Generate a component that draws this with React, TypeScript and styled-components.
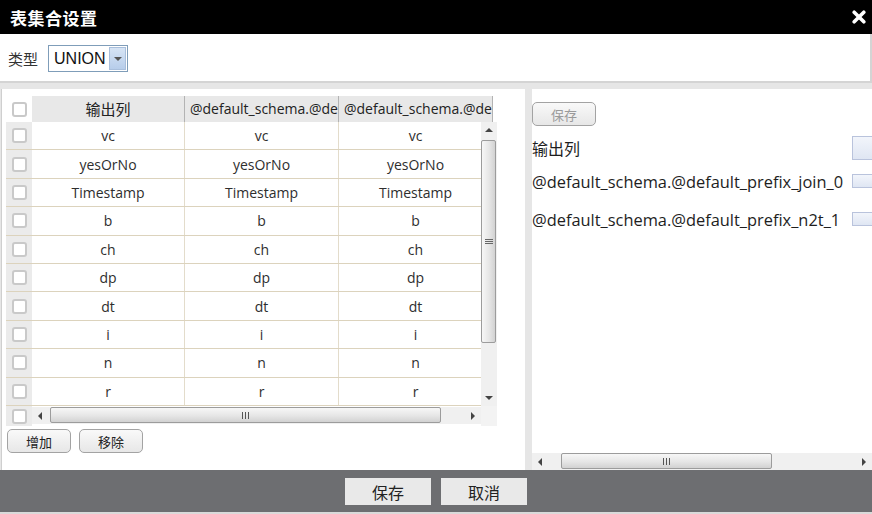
import React from 'react';
import styled, { createGlobalStyle } from 'styled-components';

const Global = createGlobalStyle`
  *, *::before, *::after { box-sizing: border-box; }
  html, body { margin: 0; padding: 0; background: #ffffff; }
  body { font-family: "Open Sans", "Noto Sans CJK SC", sans-serif; }
`;

const Dialog = styled.div`
  width: 872px;
  height: 514px;
  display: flex;
  flex-direction: column;
  overflow: hidden;
  background: #e6e6e6;
`;

const TitleBar = styled.div`
  height: 34px;
  flex: none;
  background: #000;
  color: #fff;
  display: flex;
  align-items: center;
  justify-content: space-between;
  padding: 0 6px 0 10px;
  font-family: "Noto Sans CJK SC", sans-serif;
  font-weight: 700;
  font-size: 17px;
  letter-spacing: 0.5px;
`;

const CloseBtn = styled.span`
  width: 14px;
  height: 14px;
  display: flex;
`;

const TypeRow = styled.div`
  height: 49px;
  flex: none;
  background: #fff;
  border-bottom: 2px solid #d4d4d4;
  border-right: 2px solid #d4d4d4;
  display: flex;
  align-items: center;
  gap: 10px;
  padding: 2px 0 0 8px;
`;

const TypeLabel = styled.span`
  font-family: "Noto Sans CJK SC", sans-serif;
  font-size: 15px;
  color: #333;
`;

const Select = styled.div`
  width: 80px;
  height: 27px;
  border: 1px solid #7f9db9;
  display: flex;
  background: #fff;
`;

const SelectText = styled.span`
  flex: 1;
  padding-left: 5px;
  font-family: "Liberation Sans", Arial, sans-serif;
  font-size: 16px;
  line-height: 25px;
  color: #111;
`;

const SelectBtn = styled.span`
  width: 17px;
  margin: 1px;
  border: 1px solid #a9bfdc;
  background: linear-gradient(to bottom, #d6e4f5, #b7cdea);
  display: flex;
  align-items: center;
  justify-content: center;
`;

const Main = styled.div`
  flex: 1;
  display: flex;
  gap: 7px;
  padding-top: 6px;
  min-height: 0;
`;

const LeftPanel = styled.div`
  width: 524px;
  flex: none;
  margin-left: 1px;
  border-left: 1px solid #cfcfcf;
  background: #fff;
  padding: 7px 0 0 4px;
`;

const RightPanel = styled.div`
  flex: 1;
  min-width: 0;
  background: #fff;
  display: flex;
  flex-direction: column;
  overflow: hidden;
  padding-top: 13px;
`;

const TableBox = styled.div`
  width: 491px;
  display: flex;
  flex-direction: column;
`;

const HeadRow = styled.div`
  display: flex;
  height: 26px;
  overflow: hidden;
`;

const CheckCol = styled.div<{ $head?: boolean }>`
  width: 26px;
  flex: none;
  background: ${(p) => (p.$head ? '#ffffff' : '#ebebeb')};
  display: flex;
  align-items: center;
  justify-content: center;
`;

const HeadCell = styled.div<{ $w: number; $cjk?: boolean }>`
  width: ${(p) => p.$w}px;
  flex: none;
  background: #e8e8e8;
  border-right: 1px solid #b3b3b3;
  padding: 0 5px;
  text-align: center;
  white-space: nowrap;
  overflow: hidden;
  font-family: ${(p) => (p.$cjk ? '"Noto Sans CJK SC", sans-serif' : '"Open Sans", sans-serif')};
  font-size: ${(p) => (p.$cjk ? 15 : 14)}px;
  line-height: 26px;
  color: #222;
`;

const Body = styled.div`
  display: flex;
  height: 284px;
`;

const Rows = styled.div`
  width: 475px;
  flex: none;
  overflow: hidden;
`;

const Row = styled.div`
  display: flex;
  width: 487px;
  height: 28.4px;
  border-bottom: 1px solid #dcd3bd;
`;

const Cell = styled.div<{ $w: number }>`
  width: ${(p) => p.$w}px;
  flex: none;
  border-right: 1px solid #e3dccb;
  display: flex;
  align-items: center;
  justify-content: center;
  font-size: 14px;
  color: #2e2e2e;
  white-space: nowrap;
`;

const Check = styled.span`
  width: 15px;
  height: 15px;
  border: 2px solid #c9c9c9;
  border-radius: 3px;
  background: #fff;
`;

const VScroll = styled.div`
  width: 16px;
  flex: none;
  background: #f0f0f0;
  display: flex;
  flex-direction: column;
`;

const VTrack = styled.div`
  flex: 1;
  display: flex;
  flex-direction: column;
`;

const VThumb = styled.div<{ $off: number; $len: number }>`
  margin-top: ${(p) => p.$off}px;
  height: ${(p) => p.$len}px;
  width: 15px;
  border: 1px solid #9c9c9c;
  border-radius: 2px;
  background: linear-gradient(to right, #f7f7f7, #e6e6e6 55%, #d2d2d2);
  display: flex;
  align-items: center;
  justify-content: center;
`;

const BottomRow = styled.div`
  display: flex;
  height: 20px;
`;

const HScroll = styled.div<{ $w?: number }>`
  ${(p) => (p.$w ? `width: ${p.$w}px; flex: none;` : 'flex: none; width: 100%;')}
  height: 17px;
  margin-top: 1px;
  background: #f0f0f0;
  display: flex;
`;

const HTrack = styled.div`
  flex: 1;
  display: flex;
`;

const HThumb = styled.div<{ $off: number; $len: number }>`
  margin-left: ${(p) => p.$off}px;
  width: ${(p) => p.$len}px;
  height: 16px;
  border: 1px solid #9c9c9c;
  border-radius: 2px;
  background: linear-gradient(to bottom, #f7f7f7, #e6e6e6 55%, #d2d2d2);
  display: flex;
  align-items: center;
  justify-content: center;
`;

const Arrow = styled.span<{ $v?: boolean }>`
  width: 16px;
  height: ${(p) => (p.$v ? '16px' : '17px')};
  flex: none;
  display: flex;
  align-items: center;
  justify-content: center;
`;

const Corner = styled.div`
  width: 16px;
  flex: none;
  background: #f3f3f3;
`;

const ActionRow = styled.div`
  display: flex;
  gap: 8px;
  margin-top: 3px;
  margin-left: 1px;
`;

const SmallBtn = styled.button<{ $disabled?: boolean }>`
  width: 64px;
  height: 24px;
  padding: 0;
  border: 1px solid #a3a3a3;
  border-radius: 5px;
  background: linear-gradient(to bottom, #f9f9f9, #e7e7e7);
  font-family: "Noto Sans CJK SC", sans-serif;
  font-size: 13px;
  color: ${(p) => (p.$disabled ? '#9a9a9a' : '#222')};
`;

const RightTop = styled.div`
  display: flex;
`;

const MapList = styled.div`
  display: grid;
  grid-template-columns: 320px 60px;
  grid-template-rows: 24px 34px 34px;
  row-gap: 4px;
  margin-top: 10px;
  align-items: center;
`;

const MapLabel = styled.span<{ $cjk?: boolean }>`
  font-family: ${(p) => (p.$cjk ? '"Noto Sans CJK SC", sans-serif' : '"Open Sans", sans-serif')};
  font-size: ${(p) => (p.$cjk ? 16 : 16.4)}px;
  color: #1e1e1e;
  white-space: nowrap;
`;

const MapBox = styled.span<{ $tall?: boolean }>`
  width: 40px;
  height: ${(p) => (p.$tall ? 24 : 14)}px;
  border: 1px solid #b9c3dc;
  background: linear-gradient(to bottom, #f2f5fb, #dfe6f3);
`;

const Spacer = styled.div`
  flex: 1;
`;

const Footer = styled.div`
  height: 44px;
  flex: none;
  background: #6d6e71;
  border-bottom: 2px solid #dadada;
  display: flex;
  justify-content: center;
  align-items: flex-start;
  gap: 10px;
  padding-top: 8px;
`;

const FooterBtn = styled.button`
  width: 86px;
  height: 27px;
  padding: 0;
  border: none;
  background: #e9e9e9;
  font-family: "Noto Sans CJK SC", sans-serif;
  font-size: 16px;
  color: #222;
`;

const Tri = ({ dir }: { dir: 'up' | 'down' | 'left' | 'right' }) => {
  const pts = {
    up: '0,4 4,0 8,4',
    down: '0,0 8,0 4,4',
    left: '4,0 4,8 0,4',
    right: '0,0 0,8 4,4',
  }[dir];
  const v = dir === 'up' || dir === 'down';
  return (
    <svg width={v ? 8 : 4} height={v ? 4 : 8} viewBox={v ? '0 0 8 4' : '0 0 4 8'}>
      <polygon points={pts} fill="#444" />
    </svg>
  );
};

const GripH = () => (
  <svg width="9" height="7" viewBox="0 0 9 7">
    <path d="M1.5 0v7M4.5 0v7M7.5 0v7" stroke="#555" strokeWidth="1" />
  </svg>
);

const GripV = () => (
  <svg width="8" height="7" viewBox="0 0 8 7">
    <path d="M0 1.5h8M0 3.5h8M0 5.5h8" stroke="#666" strokeWidth="1" />
  </svg>
);

const rows = ['vc', 'yesOrNo', 'Timestamp', 'b', 'ch', 'dp', 'dt', 'i', 'n', 'r'];
const widths = [153, 154, 154];

export default function App() {
  return (
    <>
      <Global />
      <Dialog>
        <TitleBar>
          <span>表集合设置</span>
          <CloseBtn>
            <svg width="14" height="14" viewBox="0 0 14 14">
              <path d="M2.2 2.2L11.8 11.8M11.8 2.2L2.2 11.8" stroke="#fff" strokeWidth="3.6" strokeLinecap="round" />
            </svg>
          </CloseBtn>
        </TitleBar>
        <TypeRow>
          <TypeLabel>类型</TypeLabel>
          <Select>
            <SelectText>UNION</SelectText>
            <SelectBtn>
              <svg width="8" height="4" viewBox="0 0 8 4">
                <polygon points="0,0 8,0 4,4" fill="#555" />
              </svg>
            </SelectBtn>
          </Select>
        </TypeRow>
        <Main>
          <LeftPanel>
            <TableBox>
              <HeadRow>
                <CheckCol $head>
                  <Check />
                </CheckCol>
                <HeadCell $w={widths[0]} $cjk>输出列</HeadCell>
                <HeadCell $w={widths[1]}>@default_schema.@default_prefix_join_0</HeadCell>
                <HeadCell $w={widths[2]}>@default_schema.@default_prefix_n2t_1</HeadCell>
              </HeadRow>
              <Body>
                <Rows>
                  {rows.map((r) => (
                    <Row key={r}>
                      <CheckCol>
                        <Check />
                      </CheckCol>
                      {widths.map((w, i) => (
                        <Cell key={i} $w={w}>{r}</Cell>
                      ))}
                    </Row>
                  ))}
                </Rows>
                <VScroll>
                  <Arrow $v>
                    <Tri dir="up" />
                  </Arrow>
                  <VTrack>
                    <VThumb $off={2} $len={203}>
                      <GripV />
                    </VThumb>
                  </VTrack>
                  <Arrow $v>
                    <Tri dir="down" />
                  </Arrow>
                </VScroll>
              </Body>
              <BottomRow>
                <CheckCol>
                  <Check />
                </CheckCol>
                <HScroll $w={449}>
                  <Arrow>
                    <Tri dir="left" />
                  </Arrow>
                  <HTrack>
                    <HThumb $off={2} $len={391}>
                      <GripH />
                    </HThumb>
                  </HTrack>
                  <Arrow>
                    <Tri dir="right" />
                  </Arrow>
                </HScroll>
                <Corner />
              </BottomRow>
            </TableBox>
            <ActionRow>
              <SmallBtn>增加</SmallBtn>
              <SmallBtn>移除</SmallBtn>
            </ActionRow>
          </LeftPanel>
          <RightPanel>
            <RightTop>
              <SmallBtn $disabled>保存</SmallBtn>
            </RightTop>
            <MapList>
              <MapLabel $cjk>输出列</MapLabel>
              <MapBox $tall />
              <MapLabel>@default_schema.@default_prefix_join_0</MapLabel>
              <MapBox />
              <MapLabel>@default_schema.@default_prefix_n2t_1</MapLabel>
              <MapBox />
            </MapList>
            <Spacer />
            <HScroll>
              <Arrow>
                <Tri dir="left" />
              </Arrow>
              <HTrack>
                <HThumb $off={13} $len={211}>
                  <GripH />
                </HThumb>
              </HTrack>
              <Arrow>
                <Tri dir="right" />
              </Arrow>
            </HScroll>
          </RightPanel>
        </Main>
        <Footer>
          <FooterBtn>保存</FooterBtn>
          <FooterBtn>取消</FooterBtn>
        </Footer>
      </Dialog>
    </>
  );
}
